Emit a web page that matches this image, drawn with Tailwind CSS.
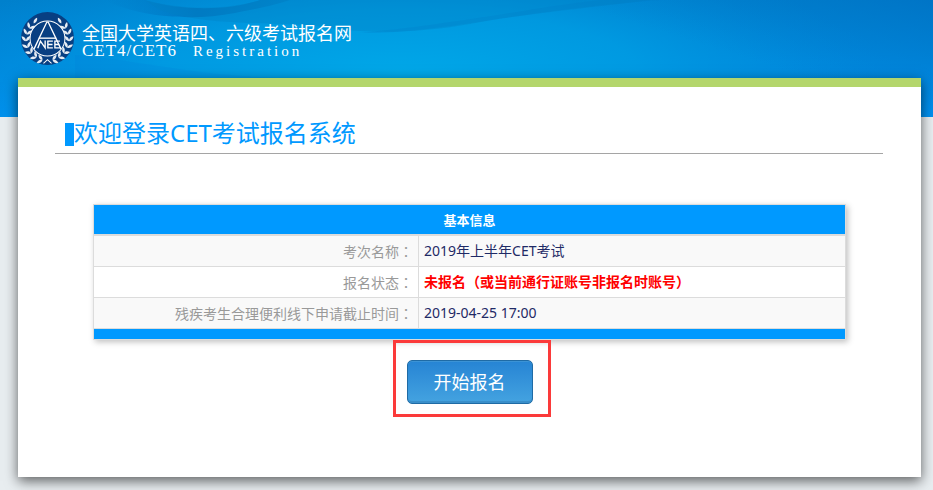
<!DOCTYPE html>
<html lang="zh-CN">
<head>
    <meta charset="UTF-8">
    <meta name="viewport" content="width=device-width, initial-scale=1.0">
    <title>全国大学英语四、六级考试报名网</title>
    <script src="https://cdn.jsdelivr.net/npm/@tailwindcss/browser@4"></script>
    <style>
        body {
            font-family: 'Noto Sans', 'Noto Sans CJK SC', sans-serif;
        }
    </style>
</head>
<body class="bg-[#e8edf0] text-sm">

    <header class="relative h-[117px] overflow-hidden bg-[#0090ec] text-white">
        <!-- Banner waves -->
        <svg class="absolute inset-0 h-full w-full" viewBox="0 0 933 117" preserveAspectRatio="none" aria-hidden="true">
            <defs>
                <linearGradient id="sky" x1="0" y1="0" x2="0" y2="1">
                    <stop offset="0" stop-color="#0080cc"/>
                    <stop offset="0.6" stop-color="#0088de"/>
                    <stop offset="1" stop-color="#0090f0"/>
                </linearGradient>
                <radialGradient id="glow" gradientUnits="userSpaceOnUse" cx="0" cy="0" r="1" gradientTransform="translate(400 75) scale(480 130)">
                    <stop offset="0" stop-color="#00a8e8"/>
                    <stop offset="0.5" stop-color="#00a0e4" stop-opacity="0.75"/>
                    <stop offset="1" stop-color="#0090dc" stop-opacity="0"/>
                </radialGradient>
                <linearGradient id="shade" x1="0" y1="0" x2="1" y2="0">
                    <stop offset="0" stop-color="#0070c0" stop-opacity="0"/>
                    <stop offset="0.5" stop-color="#0068b4" stop-opacity="0.6"/>
                    <stop offset="1" stop-color="#0074bc" stop-opacity="0.4"/>
                </linearGradient>
                <linearGradient id="corner" x1="0" y1="1" x2="1" y2="0">
                    <stop offset="0.5" stop-color="#0078cc" stop-opacity="0"/>
                    <stop offset="1" stop-color="#0070c4" stop-opacity="0.7"/>
                </linearGradient>
            </defs>
            <rect width="933" height="117" fill="url(#sky)"/>
            <rect width="933" height="117" fill="url(#glow)"/>
            <rect x="560" width="373" height="117" fill="url(#corner)"/>
            <path d="M105 0C135 16 190 22 235 13C262 8 278 4 290 0H260C230 11 180 11 145 0Z" fill="url(#shade)"/>
            <path d="M145 0C190 12 230 8 262 0H650C590 8 520 14 470 24C420 33 370 34 330 28C280 20 210 28 160 10Z" fill="#0080c4" fill-opacity="0.35"/>
            <path d="M360 33C440 34 520 10 660 0H600C530 8 470 22 360 33Z" fill="#0078c4" fill-opacity="0.2"/>
            <path d="M75 55C140 60 200 78 300 78H75Z" fill="#0078d4" fill-opacity="0.15"/>
        </svg>

        <a href="#" class="relative flex w-max items-center gap-2 pt-3 pl-[21px]">
            <svg class="h-[53px] w-[53px]" viewBox="0 0 158 158" aria-hidden="true">
                <defs>
                    <path id="leaf" d="M0 0C-8 -3 -10 -11 -8 -18C-1 -14 3 -8 0 0Z"/>
                    <g id="sprig">
                        <use href="#leaf" transform="rotate(-18)"/>
                        <use href="#leaf" transform="rotate(62)"/>
                    </g>
                    <g id="branch" fill="#fff" fill-opacity="0.9">
                        <use href="#sprig" transform="translate(64 143) rotate(-75)"/>
                        <use href="#sprig" transform="translate(46 136) rotate(-53)"/>
                        <use href="#sprig" transform="translate(31 123) rotate(-36)"/>
                        <use href="#sprig" transform="translate(20 107) rotate(-18)"/>
                        <use href="#sprig" transform="translate(15 87) rotate(0)"/>
                        <use href="#sprig" transform="translate(17 67) rotate(16)"/>
                        <use href="#sprig" transform="translate(25 49) rotate(30)"/>
                        <use href="#leaf" transform="translate(38 34) rotate(55)"/>
                    </g>
                </defs>
                <circle cx="79" cy="79" r="79" fill="#083f82"/>
                <use href="#branch"/>
                <use href="#branch" transform="matrix(-1 0 0 1 158 0)"/>
                <circle cx="79" cy="79" r="52" fill="#083f82" stroke="#fff" stroke-width="3"/>
                <g fill="none" stroke="#fff" stroke-width="4">
                    <path d="M39 110L77 30H81L119 110"/>
                    <path d="M53 78H105"/>
                    <path d="M50 108L58 87L72 107V85"/>
                    <path d="M95 87H80V107H95M80 97H94M116 87H101V107H118M101 97H114"/>
                    <path d="M67 153L79 142L91 153" stroke-width="3"/>
                </g>
            </svg>
            <span class="block pt-1">
                <span class="block text-lg leading-5">全国大学英语四、六级考试报名网</span>
                <span class="flex items-baseline gap-4 font-['Liberation_Serif',serif]">
                    <span class="text-[17px] leading-4 tracking-[1px]">CET4/CET6</span>
                    <span class="text-[15px] leading-4 tracking-[3px]">Registration</span>
                </span>
            </span>
        </a>
    </header>

    <div class="pb-[13px]">
        <main class="relative -mt-[39px] mr-3 ml-[18px] border-t-9 border-[#b4d66c] bg-white pt-9 pr-[38px] pb-[73px] pl-[37px] shadow-[0_4px_12px_rgba(0,0,0,0.6)]">
            <h1 class="flex items-start border-b border-[#a5a5a5] pb-[7px] pl-[10px] text-2xl leading-5 text-[#0099ff]">
                <span class="h-[23px] w-[9px] bg-[#0099ff]"></span>欢迎登录CET考试报名系统
            </h1>

            <div class="mr-[37px] ml-[38px] mt-[50px]">
                <table class="w-full border-separate border-spacing-0 border border-[#dcdcdc] shadow-[2px_2px_6px_rgba(0,0,0,0.25)]">
                    <thead>
                        <tr>
                            <th colspan="2" class="h-[31px] border-b-2 border-[#dcdcdc] bg-[#0099ff] p-0 text-[13px] leading-5 text-white">基本信息</th>
                        </tr>
                    </thead>
                    <tbody class="text-[#1f2a66]">
                        <tr class="bg-[#f9f9f9]">
                            <th scope="row" class="h-[31px] w-[325px] border-r border-b border-[#dcdcdc] p-0 pr-[5px] text-right font-normal leading-5 text-[#999]">考次名称<span lang="zh-Hant" class="font-['Noto_Sans_CJK_TC',sans-serif]">：</span></th>
                            <td class="border-b border-[#dcdcdc] p-0 pl-[5px] leading-5">2019年上半年CET考试</td>
                        </tr>
                        <tr class="bg-white">
                            <th scope="row" class="h-[31px] border-r border-b border-[#dcdcdc] p-0 pr-[5px] text-right font-normal leading-5 text-[#999]">报名状态<span lang="zh-Hant" class="font-['Noto_Sans_CJK_TC',sans-serif]">：</span></th>
                            <td class="border-b border-[#dcdcdc] p-0 pl-[5px] leading-5 font-bold text-[#ff0000]">未报名（或当前通行证账号非报名时账号）</td>
                        </tr>
                        <tr class="bg-[#f9f9f9]">
                            <th scope="row" class="h-[31px] border-r border-b border-[#dcdcdc] p-0 pr-[5px] text-right font-normal leading-5 text-[#999]">残疾考生合理便利线下申请截止时间<span lang="zh-Hant" class="font-['Noto_Sans_CJK_TC',sans-serif]">：</span></th>
                            <td class="border-b border-[#dcdcdc] p-0 pl-[5px] leading-5">2019-04-25 17:00</td>
                        </tr>
                    </tbody>
                    <tfoot>
                        <tr>
                            <td colspan="2" class="h-[10px] bg-[#0099ff] p-0"></td>
                        </tr>
                    </tfoot>
                </table>

                <div class="mt-5 flex justify-center">
                    <div class="relative">
                        <button type="button" class="block h-11 w-[126px] rounded-[5px] border border-[#1f6ba5] bg-linear-to-b from-[#2684d4] to-[#44a3e0] text-lg leading-6 text-white shadow-[inset_0_1px_0_#3b93d6,inset_0_-2px_0_#3a8fca]">开始报名</button>
                        <!-- Highlight frame around the button -->
                        <span class="pointer-events-none absolute -top-5 -right-[18px] -bottom-[13px] -left-[14px] border-3 border-[#fb3a3a]"></span>
                    </div>
                </div>
            </div>
        </main>
    </div>

</body>
</html>
